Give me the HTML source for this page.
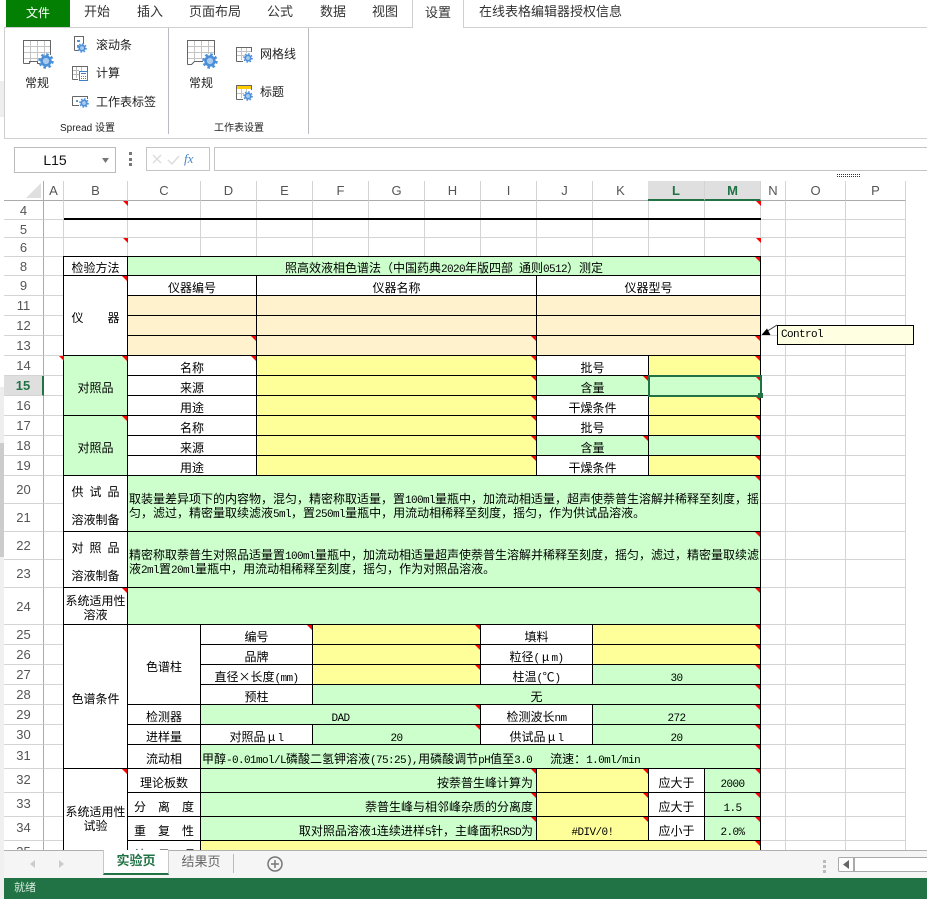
<!DOCTYPE html>
<html lang="zh"><head><meta charset="utf-8"><title>Spread</title>
<style>
html,body{margin:0;padding:0;background:#fff}
#p{position:relative;width:927px;height:901px;overflow:hidden;background:#fff;font-family:"Liberation Sans","Noto Sans CJK SC",sans-serif;color:#222}
#p div{position:absolute;box-sizing:border-box}
.t{font-size:13px;line-height:18px;top:3px;white-space:nowrap;color:#333}
.l{font-size:12px;line-height:16px;white-space:nowrap;color:#222}
.h{background:#fff;text-align:center;font-size:13px;color:#555;border-right:1px solid #d4d4d4;border-bottom:1px solid #ababab;top:181px;height:20px;line-height:20px}
.h.s{background:#dfdfdf;color:#217346;font-weight:bold;border-bottom:2px solid #217346}
.n{left:4px;width:40px;background:#fff;text-align:center;font-size:13px;color:#555;border-right:1px solid #ababab;border-bottom:1px solid #d4d4d4;padding-top:2px}
#s{left:0;top:0;width:927px;height:850px;overflow:hidden}
.c{display:flex;align-items:center;justify-content:center;background:#fff;border-right:1px solid #000;border-bottom:1px solid #000;padding-top:4px;font-family:"WenQuanYi Zen Hei","Noto Sans CJK SC",sans-serif;font-size:12px;line-height:14px;color:#000;white-space:pre;overflow:hidden;text-align:center}
.c i{font:11px/0 "Liberation Mono",monospace;letter-spacing:-.6px;white-space:pre}
.c b{font-weight:normal;display:inline-block;width:12px;text-align:center;line-height:0}
.g{background:#ccffcc}.y{background:#ffff99}.o{background:#fff2cc}
.L{justify-content:flex-start;padding-left:1px;text-align:left}
.R{justify-content:flex-end;padding-right:3px}
.r::after{content:"";position:absolute;right:0;top:0;border-top:5px solid #f00;border-left:5px solid transparent}
.v{width:0;height:0;border-top:5px solid #f00;border-left:5px solid transparent}
</style></head><body><div id="p">

<!-- left strip -->
<div style="left:0;top:81px;width:4px;height:36px;background:#eee"></div>
<div style="left:0;top:387px;width:4px;height:56px;background:#eee"></div>
<div style="left:0;top:443px;width:4px;height:114px;background:#ccc"></div>
<div style="left:0;top:557px;width:4px;height:342px;background:#f0f0f0"></div>

<!-- ribbon tabs -->
<div style="left:4px;top:27px;width:408px;height:1px;background:#d0d0d0"></div>
<div style="left:463px;top:27px;width:464px;height:1px;background:#d0d0d0"></div>
<div style="left:412px;top:0;width:1px;height:28px;background:#d0d0d0"></div>
<div style="left:463px;top:0;width:1px;height:28px;background:#d0d0d0"></div>
<div style="left:6px;top:0;width:64px;height:27px;background:#038003;color:#fff;font-size:12px;line-height:27px;text-align:center">文件</div>
<div class="t" style="left:84px">开始</div>
<div class="t" style="left:137px">插入</div>
<div class="t" style="left:189px">页面布局</div>
<div class="t" style="left:267px">公式</div>
<div class="t" style="left:320px">数据</div>
<div class="t" style="left:372px">视图</div>
<div class="t" style="left:425px;top:4px">设置</div>
<div class="t" style="left:479px">在线表格编辑器授权信息</div>

<!-- ribbon panel -->
<div style="left:4px;top:27px;width:1px;height:112px;background:#d0d0d0"></div>
<div style="left:4px;top:138px;width:923px;height:1px;background:#d0d0d0"></div>
<div style="left:168px;top:28px;width:1px;height:106px;background:#b8bcc2"></div>
<div style="left:308px;top:28px;width:1px;height:106px;background:#b8bcc2"></div>

<svg style="position:absolute;left:0;top:0" width="927" height="178" shape-rendering="crispEdges">
<defs><symbol id="gear" viewBox="-8 -8 16 16"><g shape-rendering="auto"><circle r="4.4" fill="#a9cbf0" stroke="#4a8fd8" stroke-width="2.6"/><circle r="6.6" fill="none" stroke="#4a8fd8" stroke-width="2.2" stroke-dasharray="2.6 2.58"/></g></symbol></defs>
<!-- large icon 1 -->
<path d="M30.5 40V63M37.5 40V61M44.5 40V56M24 46.5H50M24 52.5H50M24 58.5H42" stroke="#c4c4c4" fill="none"/>
<path d="M23.5 63.5V40.5H50.5V55M23.5 63.5H29.5V61.5H37.5V63.5H40" stroke="#666" fill="none"/>
<use href="#gear" x="38" y="53" width="16" height="16"/>
<!-- large icon 2 -->
<path d="M194.5 40V61M201.5 40V59M208.5 40V54M188 46.5H214M188 52.5H214M188 58.5H205" stroke="#c4c4c4" fill="none"/>
<path d="M187.5 64.5V40.5H214.5V55M187.5 64.5H191.5L194.5 61.5H203" stroke="#666" fill="none"/>
<use href="#gear" x="202" y="53" width="16" height="16"/>
<!-- scroll -->
<path d="M74.5 50.5V36.5H83.5V44" stroke="#666" fill="none"/>
<path d="M74.5 50.5H78" stroke="#666"/>
<path d="M77 40h3v2h-3zM77 45h2v2h-2z" fill="#5b93cc"/>
<use href="#gear" x="77" y="43" width="10" height="10"/>
<!-- calc -->
<path d="M72.5 79.5V66.5H87.5V71M72.5 79.5H78" stroke="#666" fill="none"/>
<path d="M73 70.5H79M73 74.5H79M76.5 67V78M81.5 67V71" stroke="#bbb" fill="none"/>
<rect x="79.5" y="71.5" width="8" height="9" fill="#fff" stroke="#3f7fc4"/>
<path d="M81 73h5v1h-5zM81 76h1v1h-1zM83 76h1v1h-1zM85 76h1v1h-1zM81 78h1v1h-1zM83 78h1v1h-1zM85 78h1v1h-1z" fill="#3f7fc4"/>
<!-- sheet tab -->
<path d="M72.5 96.5H87.5V99M72.5 96.5V105.5H79" stroke="#666" fill="none"/>
<path d="M76 100h2v2h-2z" fill="#5b93cc"/>
<use href="#gear" x="79" y="98" width="10" height="10"/>
<!-- gridlines -->
<path d="M241.5 47V60M246.5 47V53M237 51.5H251M237 55.5H245" stroke="#c4c4c4" fill="none"/>
<path d="M236.5 61.5V47.5H251.5V52M236.5 61.5H243" stroke="#666" fill="none"/>
<use href="#gear" x="243" y="53" width="10" height="10"/>
<!-- title -->
<rect x="236" y="85" width="16" height="4" fill="#ffcc00"/>
<path d="M241.5 89V98M246.5 89V92M237 93.5H244" stroke="#c4c4c4" fill="none"/>
<path d="M236.5 99.5V85.5H251.5V90M236.5 99.5H243" stroke="#666" fill="none"/>
<use href="#gear" x="243" y="91" width="10" height="10"/>

<!-- name box -->
<rect x="14.5" y="147.5" width="101" height="25" fill="#fff" stroke="#bbb"/>
<path d="M102 158h7l-3.500 5z" fill="#777" shape-rendering="auto"/>
<path d="M129 152h3v3h-3zM129 158h3v3h-3zM129 163h3v3h-3z" fill="#777"/>
<rect x="146.500" y="147.500" width="63" height="23" fill="#fff" stroke="#c4c4c4"/>
<path d="M153 155l8 8M161 155l-8 8" stroke="#ddd" stroke-width="1.500" fill="none" shape-rendering="auto"/>
<path d="M168 160l4 4 7-8" stroke="#ddd" stroke-width="1.500" fill="none" shape-rendering="auto"/>
<rect x="214.500" y="147.500" width="720" height="23" fill="#fff" stroke="#c4c4c4"/>
<path d="M837 174.500H860M837 176.500H860" stroke="#333" stroke-dasharray="1 1" fill="none"/>
<path d="M4 180.500H927" stroke="#c8c8c8"/>
</svg>
<div style="left:14px;top:151px;width:82px;height:18px;font-size:14px;line-height:18px;text-align:center;color:#111">L15</div>
<div style="left:184px;top:150px;width:22px;height:18px;font:italic 13px/18px 'Liberation Serif',serif;color:#4a86c8">fx</div>

<div class="l" style="left:25px;top:75px">常规</div>
<div class="l" style="left:96px;top:37px">滚动条</div>
<div class="l" style="left:96px;top:65px">计算</div>
<div class="l" style="left:96px;top:94px">工作表标签</div>
<div class="l" style="left:60px;top:121px;font-size:10px;line-height:15px">Spread 设置</div>
<div class="l" style="left:189px;top:75px">常规</div>
<div class="l" style="left:260px;top:46px">网格线</div>
<div class="l" style="left:260px;top:84px">标题</div>
<div class="l" style="left:214px;top:121px;font-size:10px;line-height:15px">工作表设置</div>

<!-- sheet -->
<div id="s">
<svg style="position:absolute;left:0;top:0" width="927" height="850" shape-rendering="crispEdges">
<path d="M63.500 181V850M127.500 201V850M200.500 201V850M256.500 201V850M312.500 201V850M368.500 201V850M424.500 201V850M480.500 201V850M536.500 201V850M592.500 201V850M648.500 201V850M704.500 201V850M760.500 201V850M785.500 201V850M845.500 201V850M905.500 181V850M44 219.500H906M44 237.500H906M44 256.500H906M44 275.500H906M44 295.500H906M44 315.500H906M44 335.500H906M44 355.500H906M44 375.500H906M44 395.500H906M44 415.500H906M44 435.500H906M44 455.500H906M44 475.500H906M44 503.500H906M44 531.500H906M44 559.500H906M44 587.500H906M44 624.500H906M44 644.500H906M44 664.500H906M44 684.500H906M44 704.500H906M44 724.500H906M44 744.500H906M44 768.500H906M44 792.500H906M44 816.500H906M44 840.500H906" stroke="#d4d4d4" fill="none"/>
</svg>

<!-- column headers -->
<div class="h" style="left:4px;width:40px;border-right-color:#ababab"></div>
<svg style="position:absolute;left:26px;top:183px" width="16" height="16"><path d="M15 0V15H0z" fill="#dfdfdf"/></svg>
<div class="h" style="left:44px;width:20px">A</div>
<div class="h" style="left:64px;width:64px">B</div>
<div class="h" style="left:128px;width:73px">C</div>
<div class="h" style="left:201px;width:56px">D</div>
<div class="h" style="left:257px;width:56px">E</div>
<div class="h" style="left:313px;width:56px">F</div>
<div class="h" style="left:369px;width:56px">G</div>
<div class="h" style="left:425px;width:56px">H</div>
<div class="h" style="left:481px;width:56px">I</div>
<div class="h" style="left:537px;width:56px">J</div>
<div class="h" style="left:593px;width:56px">K</div>
<div class="h s" style="left:648px;width:57px">L</div>
<div class="h s" style="left:705px;width:56px">M</div>
<div class="h" style="left:761px;width:25px">N</div>
<div class="h" style="left:786px;width:60px">O</div>
<div class="h" style="left:846px;width:60px">P</div>

<!-- row headers -->
<div class="n" style="top:201px;height:19px">4</div>
<div class="n" style="top:220px;height:18px">5</div>
<div class="n" style="top:238px;height:19px">6</div>
<div class="n" style="top:257px;height:19px">8</div>
<div class="n" style="top:276px;height:20px">9</div>
<div class="n" style="top:296px;height:20px">11</div>
<div class="n" style="top:316px;height:20px">12</div>
<div class="n" style="top:336px;height:20px">13</div>
<div class="n" style="top:356px;height:20px">14</div>
<div class="n" style="top:376px;height:20px;background:#dfdfdf;color:#217346;font-weight:bold;border-right:2px solid #217346">15</div>
<div class="n" style="top:396px;height:20px">16</div>
<div class="n" style="top:416px;height:20px">17</div>
<div class="n" style="top:436px;height:20px">18</div>
<div class="n" style="top:456px;height:20px">19</div>
<div class="n" style="top:476px;height:28px;padding-top:6px">20</div>
<div class="n" style="top:504px;height:28px;padding-top:6px">21</div>
<div class="n" style="top:532px;height:28px;padding-top:6px">22</div>
<div class="n" style="top:560px;height:28px;padding-top:6px">23</div>
<div class="n" style="top:588px;height:37px;padding-top:11px">24</div>
<div class="n" style="top:625px;height:20px">25</div>
<div class="n" style="top:645px;height:20px">26</div>
<div class="n" style="top:665px;height:20px">27</div>
<div class="n" style="top:685px;height:20px">28</div>
<div class="n" style="top:705px;height:20px">29</div>
<div class="n" style="top:725px;height:20px">30</div>
<div class="n" style="top:745px;height:24px;padding-top:3px">31</div>
<div class="n" style="top:769px;height:24px;padding-top:3px">32</div>
<div class="n" style="top:793px;height:24px;padding-top:3px">33</div>
<div class="n" style="top:817px;height:24px;padding-top:3px">34</div>
<div class="n" style="top:841px;height:24px;padding-top:3px">35</div>

<!-- thick line -->
<div style="left:64px;top:218px;width:697px;height:2px;background:#000"></div>
<!-- table outer top/left -->
<div style="left:63px;top:256px;width:698px;height:1px;background:#000"></div>
<div style="left:63px;top:256px;width:1px;height:594px;background:#000"></div>

<div class="v" style="left:123px;top:201px"></div>
<div class="v" style="left:123px;top:238px"></div>
<div class="v" style="left:756px;top:201px"></div>
<div class="v" style="left:756px;top:238px"></div>
<div class="v" style="left:59px;top:356px;z-index:3"></div>

<!-- row 8 -->
<div class="c" style="left:64px;top:257px;width:64px;height:19px"><span>检验方法</span></div>
<div class="c g r" style="left:128px;top:257px;width:633px;height:19px"><span>照高效液相色谱法（中国药典<i>2020</i>年版四部<i> </i>通则<i>0512</i>）测定</span></div>
<!-- 9-13 -->
<div class="c r" style="left:64px;top:276px;width:64px;height:80px"><span>仪<i>    </i>器</span></div>
<div class="c" style="left:128px;top:276px;width:129px;height:20px"><span>仪器编号</span></div>
<div class="c" style="left:257px;top:276px;width:280px;height:20px"><span>仪器名称</span></div>
<div class="c" style="left:537px;top:276px;width:224px;height:20px"><span>仪器型号</span></div>
<div class="c o" style="left:128px;top:296px;width:129px;height:20px"></div>
<div class="c o" style="left:257px;top:296px;width:280px;height:20px"></div>
<div class="c o" style="left:537px;top:296px;width:224px;height:20px"></div>
<div class="c o" style="left:128px;top:316px;width:129px;height:20px"></div>
<div class="c o" style="left:257px;top:316px;width:280px;height:20px"></div>
<div class="c o" style="left:537px;top:316px;width:224px;height:20px"></div>
<div class="c o r" style="left:128px;top:336px;width:129px;height:20px"></div>
<div class="c o r" style="left:257px;top:336px;width:280px;height:20px"></div>
<div class="c o r" style="left:537px;top:336px;width:224px;height:20px"></div>
<!-- 14-16 -->
<div class="c g r" style="left:64px;top:356px;width:64px;height:60px"><span>对照品</span></div>
<div class="c r" style="left:128px;top:356px;width:129px;height:20px"><span>名称</span></div>
<div class="c y r" style="left:257px;top:356px;width:280px;height:20px"></div>
<div class="c" style="left:537px;top:356px;width:112px;height:20px"><span>批号</span></div>
<div class="c y r" style="left:649px;top:356px;width:112px;height:20px"></div>
<div class="c" style="left:128px;top:376px;width:129px;height:20px"><span>来源</span></div>
<div class="c y r" style="left:257px;top:376px;width:280px;height:20px"></div>
<div class="c g r" style="left:537px;top:376px;width:112px;height:20px"><span>含量</span></div>
<div class="c g r" style="left:649px;top:376px;width:112px;height:20px"></div>
<div class="c" style="left:128px;top:396px;width:129px;height:20px"><span>用途</span></div>
<div class="c y r" style="left:257px;top:396px;width:280px;height:20px"></div>
<div class="c" style="left:537px;top:396px;width:112px;height:20px"><span>干燥条件</span></div>
<div class="c y r" style="left:649px;top:396px;width:112px;height:20px"></div>
<!-- 17-19 -->
<div class="c g r" style="left:64px;top:416px;width:64px;height:60px"><span>对照品</span></div>
<div class="c" style="left:128px;top:416px;width:129px;height:20px"><span>名称</span></div>
<div class="c y r" style="left:257px;top:416px;width:280px;height:20px"></div>
<div class="c" style="left:537px;top:416px;width:112px;height:20px"><span>批号</span></div>
<div class="c y r" style="left:649px;top:416px;width:112px;height:20px"></div>
<div class="c" style="left:128px;top:436px;width:129px;height:20px"><span>来源</span></div>
<div class="c y r" style="left:257px;top:436px;width:280px;height:20px"></div>
<div class="c g r" style="left:537px;top:436px;width:112px;height:20px"><span>含量</span></div>
<div class="c g r" style="left:649px;top:436px;width:112px;height:20px"></div>
<div class="c" style="left:128px;top:456px;width:129px;height:20px"><span>用途</span></div>
<div class="c y r" style="left:257px;top:456px;width:280px;height:20px"></div>
<div class="c" style="left:537px;top:456px;width:112px;height:20px"><span>干燥条件</span></div>
<div class="c y r" style="left:649px;top:456px;width:112px;height:20px"></div>
<!-- 20-21 -->
<div class="c" style="left:64px;top:476px;width:64px;height:28px;border-bottom:0"><span>供<i> </i>试<i> </i>品</span></div>
<div class="c" style="left:64px;top:504px;width:64px;height:28px"><span>溶液制备</span></div>
<div class="c g r L" style="left:128px;top:476px;width:633px;height:56px;padding-top:5px"><span>取装量差异项下的内容物，混匀，精密称取适量，置<i>100ml</i>量瓶中，加流动相适量，超声使萘普生溶解并稀释至刻度，摇
匀，滤过，精密量取续滤液<i>5ml</i>，置<i>250ml</i>量瓶中，用流动相稀释至刻度，摇匀，作为供试品溶液。</span></div>
<!-- 22-23 -->
<div class="c" style="left:64px;top:532px;width:64px;height:28px;border-bottom:0"><span>对<i> </i>照<i> </i>品</span></div>
<div class="c" style="left:64px;top:560px;width:64px;height:28px"><span>溶液制备</span></div>
<div class="c g r L" style="left:128px;top:532px;width:633px;height:56px;padding-top:5px"><span>精密称取萘普生对照品适量置<i>100ml</i>量瓶中，加流动相适量超声使萘普生溶解并稀释至刻度，摇匀，滤过，精密量取续滤
液<i>2ml</i>置<i>20ml</i>量瓶中，用流动相稀释至刻度，摇匀，作为对照品溶液。</span></div>
<!-- 24 -->
<div class="c r" style="left:64px;top:588px;width:64px;height:37px"><span>系统适用性
溶液</span></div>
<div class="c g r" style="left:128px;top:588px;width:633px;height:37px"></div>
<!-- 25-31 -->
<div class="c" style="left:64px;top:625px;width:64px;height:144px"><span>色谱条件</span></div>
<div class="c" style="left:128px;top:625px;width:73px;height:80px"><span>色谱柱</span></div>
<div class="c r" style="left:201px;top:625px;width:112px;height:20px"><span>编号</span></div>
<div class="c y r" style="left:313px;top:625px;width:168px;height:20px"></div>
<div class="c" style="left:481px;top:625px;width:112px;height:20px"><span>填料</span></div>
<div class="c y r" style="left:593px;top:625px;width:168px;height:20px"></div>
<div class="c" style="left:201px;top:645px;width:112px;height:20px"><span>品牌</span></div>
<div class="c y r" style="left:313px;top:645px;width:168px;height:20px"></div>
<div class="c" style="left:481px;top:645px;width:112px;height:20px"><span>粒径<i>(</i><b>μ</b><i>m)</i></span></div>
<div class="c y r" style="left:593px;top:645px;width:168px;height:20px"></div>
<div class="c" style="left:201px;top:665px;width:112px;height:20px"><span>直径<b>×</b>长度<i>(mm)</i></span></div>
<div class="c y r" style="left:313px;top:665px;width:168px;height:20px"></div>
<div class="c" style="left:481px;top:665px;width:112px;height:20px"><span>柱温<i>(</i><b>℃</b><i>)</i></span></div>
<div class="c g r" style="left:593px;top:665px;width:168px;height:20px"><span><i>30</i></span></div>
<div class="c" style="left:201px;top:685px;width:112px;height:20px"><span>预柱</span></div>
<div class="c g r" style="left:313px;top:685px;width:448px;height:20px"><span>无</span></div>
<div class="c" style="left:128px;top:705px;width:73px;height:20px"><span>检测器</span></div>
<div class="c g r" style="left:201px;top:705px;width:280px;height:20px"><span><i>DAD</i></span></div>
<div class="c" style="left:481px;top:705px;width:112px;height:20px"><span>检测波长<i>nm</i></span></div>
<div class="c g r" style="left:593px;top:705px;width:168px;height:20px"><span><i>272</i></span></div>
<div class="c" style="left:128px;top:725px;width:73px;height:20px"><span>进样量</span></div>
<div class="c" style="left:201px;top:725px;width:112px;height:20px"><span>对照品<b>μ</b><i>l</i></span></div>
<div class="c g r" style="left:313px;top:725px;width:168px;height:20px"><span><i>20</i></span></div>
<div class="c" style="left:481px;top:725px;width:112px;height:20px"><span>供试品<b>μ</b><i>l</i></span></div>
<div class="c g r" style="left:593px;top:725px;width:168px;height:20px"><span><i>20</i></span></div>
<div class="c" style="left:128px;top:745px;width:73px;height:24px"><span>流动相</span></div>
<div class="c g r L" style="left:201px;top:745px;width:560px;height:24px"><span>甲醇<i>-0.01mol/L</i>磷酸二氢钾溶液<i>(75:25),</i>用磷酸调节<i>pH</i>值至<i>3.0   </i>流速：<i>1.0ml/min</i></span></div>
<!-- 32-35 -->
<div class="c r" style="left:64px;top:769px;width:64px;height:81px;align-items:flex-start;padding-top:36px;border-bottom:0"><span>系统适用性
试验</span></div>
<div class="c" style="left:128px;top:769px;width:73px;height:24px"><span>理论板数</span></div>
<div class="c g r R" style="left:201px;top:769px;width:336px;height:24px"><span>按萘普生峰计算为</span></div>
<div class="c y r" style="left:537px;top:769px;width:112px;height:24px"></div>
<div class="c" style="left:649px;top:769px;width:56px;height:24px"><span>应大于</span></div>
<div class="c g r" style="left:705px;top:769px;width:56px;height:24px"><span><i>2000</i></span></div>
<div class="c" style="left:128px;top:793px;width:73px;height:24px"><span>分<i>  </i>离<i>  </i>度</span></div>
<div class="c g r R" style="left:201px;top:793px;width:336px;height:24px"><span>萘普生峰与相邻峰杂质的分离度</span></div>
<div class="c y r" style="left:537px;top:793px;width:112px;height:24px"></div>
<div class="c" style="left:649px;top:793px;width:56px;height:24px"><span>应大于</span></div>
<div class="c g r" style="left:705px;top:793px;width:56px;height:24px"><span><i>1.5</i></span></div>
<div class="c" style="left:128px;top:817px;width:73px;height:24px"><span>重<i>  </i>复<i>  </i>性</span></div>
<div class="c g r R" style="left:201px;top:817px;width:336px;height:24px"><span>取对照品溶液<i>1</i>连续进样<i>5</i>针，主峰面积<i>RSD</i>为</span></div>
<div class="c y r" style="left:537px;top:817px;width:112px;height:24px"><span><i>#DIV/0!</i></span></div>
<div class="c" style="left:649px;top:817px;width:56px;height:24px"><span>应小于</span></div>
<div class="c g r" style="left:705px;top:817px;width:56px;height:24px"><span><i>2.0%</i></span></div>
<div class="c" style="left:128px;top:841px;width:73px;height:24px"><span>结<i>  </i>果<i>  </i>项</span></div>
<div class="c y r" style="left:201px;top:841px;width:560px;height:24px"></div>

<!-- selection -->
<div style="left:648px;top:375px;width:114px;height:22px;border:2px solid #217346;z-index:4"></div>
<div style="left:758px;top:393px;width:5px;height:5px;background:#217346;z-index:5"></div>

<!-- comment -->
<svg style="position:absolute;left:755px;top:320px;z-index:5" width="30" height="20"><path d="M22 5L11 12" stroke="#333" stroke-width="1" fill="none"/><path d="M6.500 15L15.500 15L12 8.500z" fill="#000"/></svg>
<div style="left:777px;top:325px;width:137px;height:20px;background:#ffffe1;border:1px solid #000;font:11px/18px 'Liberation Mono',monospace;letter-spacing:-.6px;color:#000;padding-left:3px;z-index:5">Control</div>
</div>

<!-- sheet tabs -->
<div style="left:4px;top:850px;width:923px;height:28px;background:#f5f5f5;border-top:1px solid #b0b0b0"></div>
<svg style="position:absolute;left:0;top:850px" width="927" height="28">
<path d="M35 10v8l-5-4zM59 10v8l5-4z" fill="#ccc"/>
<circle cx="275" cy="14" r="7" fill="none" stroke="#777" stroke-width="1.500"/>
<path d="M271 14h8M275 10v8" stroke="#777" stroke-width="1.500"/>
<path d="M233.500 4V23" stroke="#bbb"/>
<path d="M823 10h3v3h-3zM823 15h3v3h-3zM823 20h3v3h-3z" fill="#bbb"/>
<rect x="838.500" y="7.500" width="100" height="14" fill="#fff" stroke="#aaa" rx="1"/>
<rect x="853" y="8" width="2" height="13" fill="#aaa"/>
<path d="M849 10v9l-6-4.500z" fill="#666"/>
</svg>
<div style="left:103px;top:850px;width:66px;height:25px;background:#fff;border:1px solid #c8c8c8;border-top:0;border-bottom:2px solid #217346;text-align:center;font-size:13px;font-weight:bold;line-height:22px;color:#217346">实验页</div>
<div style="left:181px;top:852px;width:40px;height:20px;text-align:center;font-size:13px;line-height:20px;color:#666">结果页</div>

<!-- status -->
<div style="left:4px;top:878px;width:923px;height:21px;background:#217346;color:#d5eadd;font-size:11px;line-height:21px;padding-left:10px">就绪</div>
</div></body></html>
